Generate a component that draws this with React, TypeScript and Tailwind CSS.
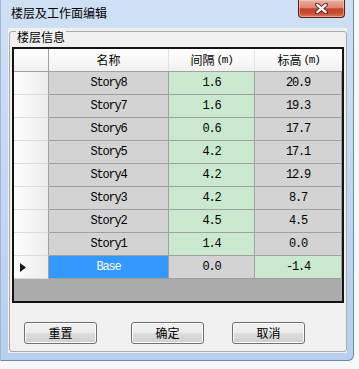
import React from "react";

const cjk = "font-['Noto_Sans_CJK_SC',sans-serif]";
const mono = "font-['Liberation_Mono','Noto_Sans_CJK_SC',monospace] tracking-[-1.2px]";

const rows = [
  { name: "Story8", gap: "1.6", elev: "20.9" },
  { name: "Story7", gap: "1.6", elev: "19.3" },
  { name: "Story6", gap: "0.6", elev: "17.7" },
  { name: "Story5", gap: "4.2", elev: "17.1" },
  { name: "Story4", gap: "4.2", elev: "12.9" },
  { name: "Story3", gap: "4.2", elev: "8.7" },
  { name: "Story2", gap: "4.5", elev: "4.5" },
  { name: "Story1", gap: "1.4", elev: "0.0" },
];

const btn =
  "w-[73px] h-[22px] rounded-[3px] border border-[#707070] bg-[linear-gradient(to_bottom,#f2f2f2_0%,#ebebeb_50%,#dddddd_50%,#cfcfcf_100%)] shadow-[inset_0_0_0_1px_#fbfbfb] flex items-center justify-center text-[12px] leading-none text-black";

function CloseButton() {
  return (
    <div className="mr-[2px] w-[47px] h-[18px] rounded-b-[4px] border border-t-0 border-[#5b1d16] bg-[linear-gradient(to_bottom,#eab0a2_0%,#dc8672_45%,#c5432c_52%,#c44a32_75%,#d8785c_100%)] shadow-[inset_0_0_0_1px_rgba(255,220,210,0.45)] flex items-center justify-center">
      <svg width="13" height="11" viewBox="0 0 13 11">
        <path d="M2 1.5 L11 9.5 M11 1.5 L2 9.5" stroke="#5a2a24" strokeWidth="4" strokeLinecap="round" />
        <path d="M2.3 1.8 L10.7 9.2 M10.7 1.8 L2.3 9.2" stroke="#ffffff" strokeWidth="2.2" strokeLinecap="round" />
      </svg>
    </div>
  );
}

function RowHeader({ current }: { current?: boolean }) {
  return (
    <div className="w-[35px] h-full border-r border-[#a0a0a0] bg-gradient-to-r from-[#fdfdfd] to-[#ececec] border-b border-b-[#dcdcdc] flex items-center pl-[6px]">
      {current && (
        <svg width="6" height="9" viewBox="0 0 6 9">
          <path d="M0 0 L6 4.5 L0 9 Z" fill="#1a1a1a" />
        </svg>
      )}
    </div>
  );
}

function Cell({ w, bg, text, white }: { w: string; bg: string; text: string; white?: boolean }) {
  return (
    <div
      className={`${w} ${bg} h-full border-r border-b border-[#a0a0a0] flex items-center justify-center text-[12px] ${mono} ${
        white ? "text-white" : "text-black"
      }`}
    >
      {text}
    </div>
  );
}

export default function App() {
  return (
    <div className={`w-[359px] h-[369px] bg-[#f7f8fa] ${cjk}`}>
      <div className="w-[354px] h-[361px] bg-gradient-to-b from-[#cfe0f5] to-[#b7cfec] border-l border-l-[#9db6d6] border-r border-b border-[#6e87a8] rounded-br-[6px] pl-[7px] pr-[6px] pb-[7px] flex flex-col">
        <div className="h-[28px] flex items-start justify-between">
          <div className="pl-[3px] pt-[6px] text-[12px] leading-[14px] text-black">楼层及工作面编辑</div>
          <CloseButton />
        </div>
        <div className="flex-1 bg-[#f0f0f0] pl-[1px] pt-[3px]">
          <div className="relative w-[338px] h-[321px] rounded-[3px] border border-[#a9a9a9] px-[2px] pt-[15px] flex flex-col">
            <div className="absolute left-[6px] top-[-2px] bg-[#f0f0f0] px-[1px] text-[12px] leading-[13px] text-black">
              楼层信息
            </div>
            <div className="w-[332px] h-[256px] border-2 border-[#141414] bg-[#ababab] flex flex-col">
              <div className="h-[23px] flex bg-gradient-to-b from-[#ffffff] to-[#f1f1f1] border-b border-[#a0a0a0]">
                <div className="w-[35px] border-r border-[#a0a0a0]" />
                <div className="w-[120px] border-r border-[#e2e2e2] flex items-center justify-center text-[12px] text-black">
                  名称
                </div>
                <div className="w-[86px] border-r border-[#e2e2e2] flex items-center justify-center text-[12px] text-black">
                  间隔<span className={`${mono} text-[11px] ml-[2px]`}>(m)</span>
                </div>
                <div className="w-[87px] flex items-center justify-center text-[12px] text-black">
                  标高<span className={`${mono} text-[11px] ml-[2px]`}>(m)</span>
                </div>
              </div>
              {rows.map((r) => (
                <div key={r.name} className="h-[23px] flex">
                  <RowHeader />
                  <Cell w="w-[120px]" bg="bg-[#d3d3d3]" text={r.name} />
                  <Cell w="w-[86px]" bg="bg-[#cae8ce]" text={r.gap} />
                  <Cell w="w-[87px]" bg="bg-[#d3d3d3]" text={r.elev} />
                </div>
              ))}
              <div className="h-[23px] flex">
                <RowHeader current />
                <Cell w="w-[120px]" bg="bg-[#3399ff]" text="Base" white />
                <Cell w="w-[86px]" bg="bg-[#d3d3d3]" text="0.0" />
                <Cell w="w-[87px]" bg="bg-[#cae8ce]" text="-1.4" />
              </div>
            </div>
            <div className="mt-[19px] ml-[12px] flex">
              <div className={btn}>重置</div>
              <div className={`${btn} ml-[34px]`}>确定</div>
              <div className={`${btn} ml-[28px]`}>取消</div>
            </div>
          </div>
        </div>
      </div>
    </div>
  );
}
